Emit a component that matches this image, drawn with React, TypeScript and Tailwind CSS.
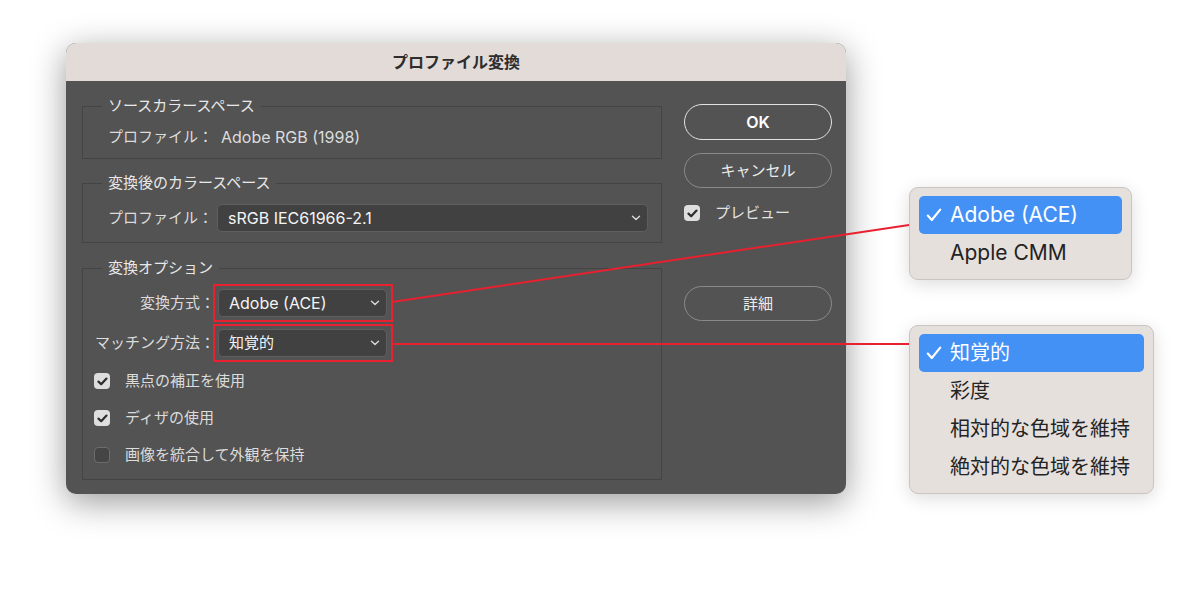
import React from "react";

const FONT = "font-['Inter','Noto_Sans_CJK_JP',sans-serif]";

function Chevron() {
  return (
    <svg width="10" height="6" viewBox="0 0 10 6" className="shrink-0">
      <path d="M1.5 1.2 L5 4.6 L8.5 1.2" fill="none" stroke="#d8d8d8" strokeWidth="1.4" strokeLinecap="round" strokeLinejoin="round" />
    </svg>
  );
}

function Select({ value, className, latin }: { value: string; className: string; latin?: boolean }) {
  return (
    <div
      className={
        "h-[28px] rounded-[5px] bg-[#414141] border border-[#5e5e5e] flex items-center pl-[10px] pr-[6px] text-[#f4f4f4] " +
        className
      }
    >
      <span className={"flex-1 truncate " + (latin ? "text-[16px]" : "")}>{value}</span>
      <Chevron />
    </div>
  );
}

function RedBox({ children }: { children: React.ReactNode }) {
  return (
    <div className="relative">
      {children}
      <span className="absolute -left-[5px] -right-[6px] -top-[5px] -bottom-[5px] border-2 border-[#e8202f] pointer-events-none" />
    </div>
  );
}

function CheckBox({ checked }: { checked: boolean }) {
  if (!checked) {
    return <span className="w-[16px] h-[16px] rounded-[4px] bg-[#454545] border border-[#6c6c6c] shrink-0" />;
  }
  return (
    <span className="w-[16px] h-[16px] rounded-[4px] bg-[#dedede] flex items-center justify-center shrink-0">
      <svg width="11" height="9" viewBox="0 0 11 9">
        <path d="M1.5 4.6 L4.2 7.2 L9.5 1.6" fill="none" stroke="#2d2d2d" strokeWidth="2.2" strokeLinecap="round" strokeLinejoin="round" />
      </svg>
    </span>
  );
}

function Group({
  title,
  children,
  className,
  legendClass,
}: {
  title: string;
  children: React.ReactNode;
  className: string;
  legendClass: string;
}) {
  return (
    <fieldset className={"border border-[#444444] " + className}>
      <legend className={"px-[6px] text-[#e8e8e8] leading-[20px] " + legendClass}>{title}</legend>
      {children}
    </fieldset>
  );
}

function PopupItem({ label, selected, latin }: { label: string; selected?: boolean; latin?: boolean }) {
  return (
    <div
      className={
        "h-[38px] flex items-center rounded-[5px] pl-[7px] " +
        (selected ? "bg-[#4491f6] text-white" : "text-[#232323]")
      }
    >
      <span className="w-[24px] shrink-0 flex items-center">
        {selected ? (
          <svg width="16" height="16" viewBox="0 0 16 16">
            <path d="M1.8 8.6 L5.8 13 L14.2 2.6" fill="none" stroke="#ffffff" strokeWidth="2.2" strokeLinecap="round" strokeLinejoin="round" />
          </svg>
        ) : null}
      </span>
      <span className={latin ? "text-[21px]" : "text-[20px]"}>{label}</span>
    </div>
  );
}

export default function App() {
  return (
    <div className={"relative w-[1200px] h-[589px] overflow-hidden bg-white flex items-start pt-[43px] pl-[66px] " + FONT}>
      {/* Dialog */}
      <div className="w-[780px] h-[451px] rounded-[10px] overflow-hidden bg-[#535353] shadow-[0_8px_34px_rgba(0,0,0,0.4)] flex flex-col text-[15px] leading-[20px] text-[#dcdcdc]">
        <div className="h-[38px] shrink-0 bg-[#e3dbd8] flex items-center justify-center text-[16px] font-bold text-[#2e2e2e]">
          プロファイル変換
        </div>
        <div className="flex-1 flex items-start pt-[15px] pl-[16px] gap-[22px]">
          {/* left column */}
          <div className="w-[580px] flex flex-col">
            <Group title="ソースカラースペース" legendClass="-ml-[6px]" className="pl-[25px] pr-[13px] pt-[11px] pb-[11px]">
              <div className="h-[20px] flex items-center">
                <span>プロファイル：</span>
                <span className="ml-[8px] text-[16px]">Adobe RGB (1998)</span>
              </div>
            </Group>
            <Group title="変換後のカラースペース" legendClass="-ml-[6px]" className="mt-[14px] pl-[25px] pr-[13px] pt-[11px] pb-[10px]">
              <div className="flex items-center">
                <span>プロファイル：</span>
                <Select value="sRGB IEC61966-2.1" latin className="ml-[4px] flex-1" />
              </div>
            </Group>
            <Group title="変換オプション" legendClass="ml-[8px]" className="mt-[15px] pl-[11px] pr-[13px] pt-[11px] pb-[14px]">
              <div className="flex items-center">
                <span className="w-[121px] text-right">変換方式：</span>
                <div className="ml-[3px]">
                  <RedBox>
                    <Select value="Adobe (ACE)" latin className="w-[169px]" />
                  </RedBox>
                </div>
              </div>
              <div className="flex items-center mt-[12px]">
                <span className="w-[121px] text-right">マッチング方法：</span>
                <div className="ml-[3px]">
                  <RedBox>
                    <Select value="知覚的" className="w-[169px]" />
                  </RedBox>
                </div>
              </div>
              <div className="h-[20px] mt-[14px] flex items-center gap-[15px]">
                <CheckBox checked />
                <span>黒点の補正を使用</span>
              </div>
              <div className="h-[20px] mt-[17px] flex items-center gap-[15px]">
                <CheckBox checked />
                <span>ディザの使用</span>
              </div>
              <div className="h-[20px] mt-[17px] flex items-center gap-[15px]">
                <CheckBox checked={false} />
                <span>画像を統合して外観を保持</span>
              </div>
            </Group>
          </div>
          {/* right column */}
          <div className="w-[148px] mt-[8px] flex flex-col">
            <button className="h-[36px] rounded-full border-[1.5px] border-[#e2e2e2] text-white text-[16px] font-semibold">OK</button>
            <button className="h-[35px] mt-[13px] rounded-full border border-[#8a8a8a] text-[#ebebeb]">キャンセル</button>
            <div className="h-[20px] mt-[15px] flex items-center gap-[15px]">
              <CheckBox checked />
              <span className="text-[#e2e2e2]">プレビュー</span>
            </div>
            <button className="h-[35px] mt-[63px] rounded-full border border-[#8a8a8a] text-[#ebebeb]">詳細</button>
          </div>
        </div>
      </div>

      {/* Popups */}
      <div className="ml-[63px] flex flex-col items-start leading-[24px]">
        <div className="mt-[144px] w-[223px] rounded-[9px] bg-[#e6e0dd] border border-[#cbc5c2] shadow-[0_4px_18px_rgba(0,0,0,0.14)] px-[9px] pt-[8px] pb-[7px]">
          <PopupItem label="Adobe (ACE)" latin selected />
          <PopupItem label="Apple CMM" latin />
        </div>
        <div className="mt-[45px] w-[245px] rounded-[9px] bg-[#e6e0dd] border border-[#cbc5c2] shadow-[0_4px_18px_rgba(0,0,0,0.14)] px-[9px] pt-[8px] pb-[7px]">
          <PopupItem label="知覚的" selected />
          <PopupItem label="彩度" />
          <PopupItem label="相対的な色域を維持" />
          <PopupItem label="絶対的な色域を維持" />
        </div>
      </div>

      {/* Annotation lines */}
      <svg className="absolute left-0 top-0 pointer-events-none" width="1200" height="589">
        <line x1="392" y1="302" x2="909" y2="225" stroke="#e8202f" strokeWidth="2" />
        <line x1="392" y1="344" x2="909" y2="344" stroke="#e8202f" strokeWidth="2" />
      </svg>
    </div>
  );
}
